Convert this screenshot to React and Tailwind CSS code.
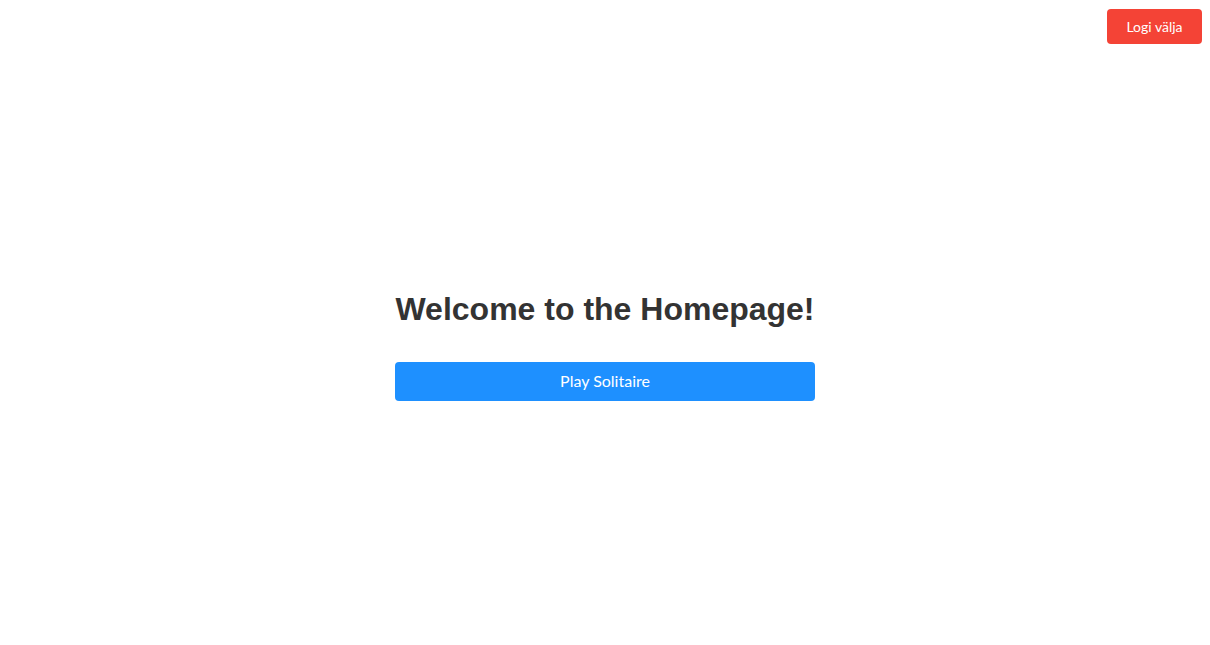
export default function App() {
  return (
    <div className="relative min-h-screen bg-white">
      <button
        type="button"
        className="absolute top-[9px] right-[8px] h-[35px] w-[95px] rounded-[4px] bg-[#f44336] font-['Lato','Noto_Sans',sans-serif] text-[14px] text-white"
      >
        Logi välja
      </button>
      <main className="flex h-[645px] flex-col items-center justify-center pt-[46px]">
        <h1 className="font-['Liberation_Sans',Arial,sans-serif] text-[32px] leading-[normal] font-bold text-[#333333]">
          Welcome to the Homepage!
        </h1>
        <button
          type="button"
          className="mt-[34px] h-[39px] w-[420px] rounded-[4px] bg-[#1e90ff] font-['Lato','Noto_Sans',sans-serif] text-[16px] text-white"
        >
          Play Solitaire
        </button>
      </main>
    </div>
  );
}
